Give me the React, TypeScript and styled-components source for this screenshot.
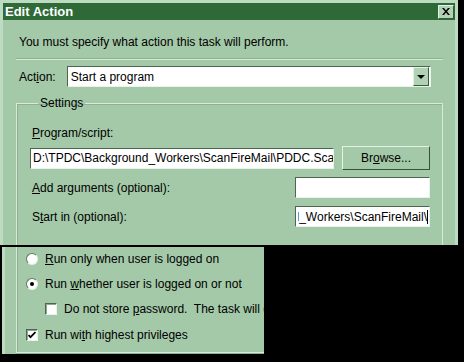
import styled, { createGlobalStyle } from 'styled-components'

const GlobalStyle = createGlobalStyle`
  html, body {
    margin: 0;
    padding: 0;
    background: #000;
  }
  body {
    font-family: 'Liberation Sans', Arial, sans-serif;
    font-size: 12px;
    color: #000;
  }
`

const Screen = styled.div`
  width: 464px;
  height: 362px;
  background: #000;
  overflow: hidden;
  display: flex;
  flex-direction: column;
  gap: 2px;
`

const Window = styled.div`
  width: 452px;
  height: 242px;
  border: 3px solid #bddbc1;
  border-bottom: none;
  background: #a4c9a8;
  display: flex;
  flex-direction: column;
  overflow: hidden;
`

const TitleBar = styled.div`
  height: 17px;
  background: #2d6a37;
  display: flex;
  align-items: center;
  justify-content: space-between;
  padding: 0 1px 0 2px;
`

const Title = styled.span`
  color: #fff;
  font-weight: bold;
  font-size: 13px;
`

const CloseButton = styled.div`
  width: 14px;
  height: 12px;
  background: #b2d2b6;
  border: 1px solid;
  border-color: #e4f2e5 #3a5a3e #3a5a3e #e4f2e5;
  display: flex;
  align-items: center;
  justify-content: center;
  svg {
    width: 8px;
    height: 7px;
  }
`

const Body = styled.div`
  flex: 1;
  display: flex;
  flex-direction: column;
  padding: 15px 12px 0 13px;
`

const Intro = styled.div`
  line-height: 14px;
  padding-left: 3px;
`

const Separator = styled.div`
  height: 1px;
  margin: 10px 0 6px;
  background: #d8ebda;
  box-shadow: 0 -1px 0 #8fb093;
`

const ActionRow = styled.div`
  display: flex;
  align-items: center;
  padding-left: 3px;
  gap: 8px;
`

const Field = styled.div<{ $width: number; $height?: number }>`
  width: ${(p) => p.$width}px;
  height: ${(p) => p.$height ?? 21}px;
  flex-shrink: 0;
  box-sizing: border-box;
  background: #fff;
  border: 1px solid;
  border-color: #4c6650 #e8f3e9 #e8f3e9 #4c6650;
  display: flex;
  align-items: center;
  overflow: hidden;
  white-space: nowrap;
  padding-left: 2px;
`

const Combo = styled(Field)`
  justify-content: space-between;
  padding: 0 0 0 3px;
  margin-left: 3px;
`

const DropButton = styled.div`
  width: 14px;
  height: 17px;
  margin-right: 1px;
  background: #b2d2b6;
  border: 1px solid;
  border-color: #e4f2e5 #3a5a3e #3a5a3e #e4f2e5;
  display: flex;
  align-items: center;
  justify-content: center;
`

const Arrow = styled.div`
  width: 0;
  height: 0;
  border-left: 4px solid transparent;
  border-right: 4px solid transparent;
  border-top: 4px solid #000;
`

const GroupBox = styled.fieldset`
  flex: 1;
  margin: 9px 0 0;
  padding: 16px 12px 0 13px;
  border: 1px solid #d8ebda;
  border-bottom: none;
  box-shadow: inset 1px 1px 0 #8fb093;
  display: flex;
  flex-direction: column;
`

const Legend = styled.legend`
  margin-left: 8px;
  padding: 0 2px;
  line-height: 14px;
`

const Label = styled.div`
  line-height: 14px;
  padding-left: 2px;
`

const Row = styled.div<{ $gap?: number }>`
  display: flex;
  align-items: center;
  justify-content: space-between;
  margin-top: ${(p) => p.$gap ?? 0}px;
`

const InputRow = styled.div`
  display: flex;
  align-items: center;
  gap: 8px;
  margin-top: 6px;
`

const Button = styled.div`
  width: 88px;
  height: 24px;
  box-sizing: border-box;
  background: #a4c9a8;
  border: 1px solid;
  border-color: #e4f2e5 #35533a #35533a #e4f2e5;
  display: flex;
  align-items: center;
  justify-content: center;
`

const ScrolledText = styled.div`
  flex: 1;
  display: flex;
  justify-content: flex-end;
  overflow: hidden;
  white-space: nowrap;
`

const Caret = styled.span`
  width: 1px;
  height: 14px;
  background: #000;
  margin: 0 1px 0 0;
`

const Panel = styled.div`
  width: 248px;
  height: 107px;
  margin-left: 2px;
  border-left: 3px solid #bddbc1;
  background: #a4c9a8;
  overflow: hidden;
  padding: 0 0 0 11px;
  box-sizing: content-box;
`

const Options = styled.div`
  width: 320px;
  height: 106px;
  box-sizing: border-box;
  border-left: 1px solid #d8ebda;
  border-bottom: 1px solid #d8ebda;
  box-shadow: inset 1px 0 0 #8fb093, 0 1px 0 #8fb093;
  padding: 5px 0 0 9px;
  display: flex;
  flex-direction: column;
`

const Option = styled.div<{ $indent?: number; $top: number }>`
  display: flex;
  align-items: center;
  gap: 7px;
  white-space: nowrap;
  line-height: 14px;
  margin-top: ${(p) => p.$top}px;
  padding-left: ${(p) => p.$indent ?? 0}px;
`

const Radio = styled.div<{ $checked?: boolean }>`
  width: 12px;
  height: 12px;
  flex-shrink: 0;
  box-sizing: border-box;
  border-radius: 50%;
  background: #fff;
  border: 1px solid;
  border-color: #5b7a5f #e8f3e9 #e8f3e9 #5b7a5f;
  display: flex;
  align-items: center;
  justify-content: center;
  &::after {
    content: '';
    display: ${(p) => (p.$checked ? 'block' : 'none')};
    width: 4px;
    height: 4px;
    border-radius: 50%;
    background: #000;
  }
`

const Check = styled.div`
  width: 12px;
  height: 12px;
  flex-shrink: 0;
  box-sizing: border-box;
  background: #fff;
  border: 1px solid;
  border-color: #4c6650 #e8f3e9 #e8f3e9 #4c6650;
  box-shadow: inset 1px 1px 0 #8fa891;
  display: flex;
  align-items: center;
  justify-content: center;
  svg {
    width: 8px;
    height: 8px;
  }
`

export default function App() {
  return (
    <>
      <GlobalStyle />
      <Screen>
        <Window>
          <TitleBar>
            <Title>Edit Action</Title>
            <CloseButton>
              <svg viewBox="0 0 8 7">
                <path d="M0 0h2l2 2.5L6 0h2L5 3.5 8 7H6L4 4.5 2 7H0l3-3.5z" fill="#000" />
              </svg>
            </CloseButton>
          </TitleBar>
          <Body>
            <Intro>You must specify what action this task will perform.</Intro>
            <Separator />
            <ActionRow>
              <span>
                Act<u>i</u>on:
              </span>
              <Combo $width={364}>
                Start a program
                <DropButton>
                  <Arrow />
                </DropButton>
              </Combo>
            </ActionRow>
            <GroupBox>
              <Legend>Settings</Legend>
              <Label>
                <u>P</u>rogram/script:
              </Label>
              <InputRow>
                <Field $width={304}>D:\TPDC\Background_Workers\ScanFireMail\PDDC.Scan</Field>
                <Button>
                  <span>
                    Br<u>o</u>wse...
                  </span>
                </Button>
              </InputRow>
              <Row $gap={7}>
                <Label>
                  <u>A</u>dd arguments (optional):
                </Label>
                <Field $width={135} />
              </Row>
              <Row $gap={8}>
                <Label>
                  S<u>t</u>art in (optional):
                </Label>
                <Field $width={135}>
                  <ScrolledText>d_Workers\ScanFireMail\</ScrolledText>
                  <Caret />
                </Field>
              </Row>
            </GroupBox>
          </Body>
        </Window>
        <Panel>
          <Options>
            <Option $top={0}>
              <Radio />
              <span>
                <u>R</u>un only when user is logged on
              </span>
            </Option>
            <Option $top={11}>
              <Radio $checked />
              <span>
                Run <u>w</u>hether user is logged on or not
              </span>
            </Option>
            <Option $top={11} $indent={19}>
              <Check />
              <span>
                Do not store <u>p</u>assword.&nbsp; The task will o
              </span>
            </Option>
            <Option $top={12}>
              <Check>
                <svg viewBox="0 0 8 8">
                  <path d="M0.5 4l2 2.2L7.5 1" fill="none" stroke="#000" strokeWidth="1.8" />
                </svg>
              </Check>
              <span>
                Run wi<u>t</u>h highest privileges
              </span>
            </Option>
          </Options>
        </Panel>
      </Screen>
    </>
  )
}
